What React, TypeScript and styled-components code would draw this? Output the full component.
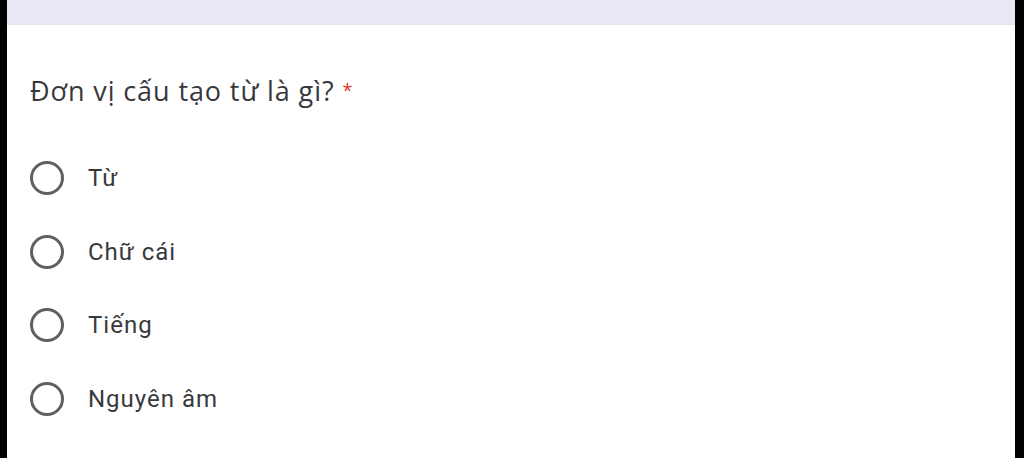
import React from 'react';
import styled, {createGlobalStyle} from "styled-components";

const GlobalStyle = createGlobalStyle`
  html, body {
    margin: 0;
    padding: 0;
    background: #000;
  }
  #root {
    height: 458px;
  }
`

const Frame = styled.div`
  height: 458px;
  margin: 0 9px 0 7px;
  background: #fff;
  display: flex;
  flex-direction: column;
`

const TopBand = styled.div`
  height: 24px;
  background: #ebe8f6;
  border-bottom: 1px solid #e6e3ee;
`

const Card = styled.div`
  padding: 47px 23px 0 23px;
`

const Question = styled.div`
  font-family: "Open Sans", "Liberation Sans", sans-serif;
  font-size: 27px;
  color: #38383c;
  letter-spacing: 0.9px;
  line-height: 36px;
`

const Required = styled.span`
  color: #d93025;
  margin-left: 8px;
  font-size: 18px;
  vertical-align: 4px;
`

const OptionList = styled.div`
  display: flex;
  flex-direction: column;
  gap: 39.7px;
  margin-top: 52px;
`

const Option = styled.label`
  display: flex;
  align-items: center;
  gap: 24px;
  height: 34px;
`

const RadioCircle = styled.span`
  box-sizing: border-box;
  width: 34px;
  height: 34px;
  border-radius: 50%;
  border: 3px solid #5f6064;
  flex: none;
`

const OptionText = styled.span`
  font-family: Roboto, "Liberation Sans", sans-serif;
  font-size: 24px;
  letter-spacing: 1px;
  color: #38393d;
`

const options = ['Từ', 'Chữ cái', 'Tiếng', 'Nguyên âm'];

export default function App() {
  return (
    <>
      <GlobalStyle/>
      <Frame>
        <TopBand/>
        <Card>
          <Question>
            Đơn vị cấu tạo từ là gì?<Required>*</Required>
          </Question>
          <OptionList>
            {options.map(option => (
              <Option key={option}>
                <RadioCircle/>
                <OptionText>{option}</OptionText>
              </Option>
            ))}
          </OptionList>
        </Card>
      </Frame>
    </>
  );
}
